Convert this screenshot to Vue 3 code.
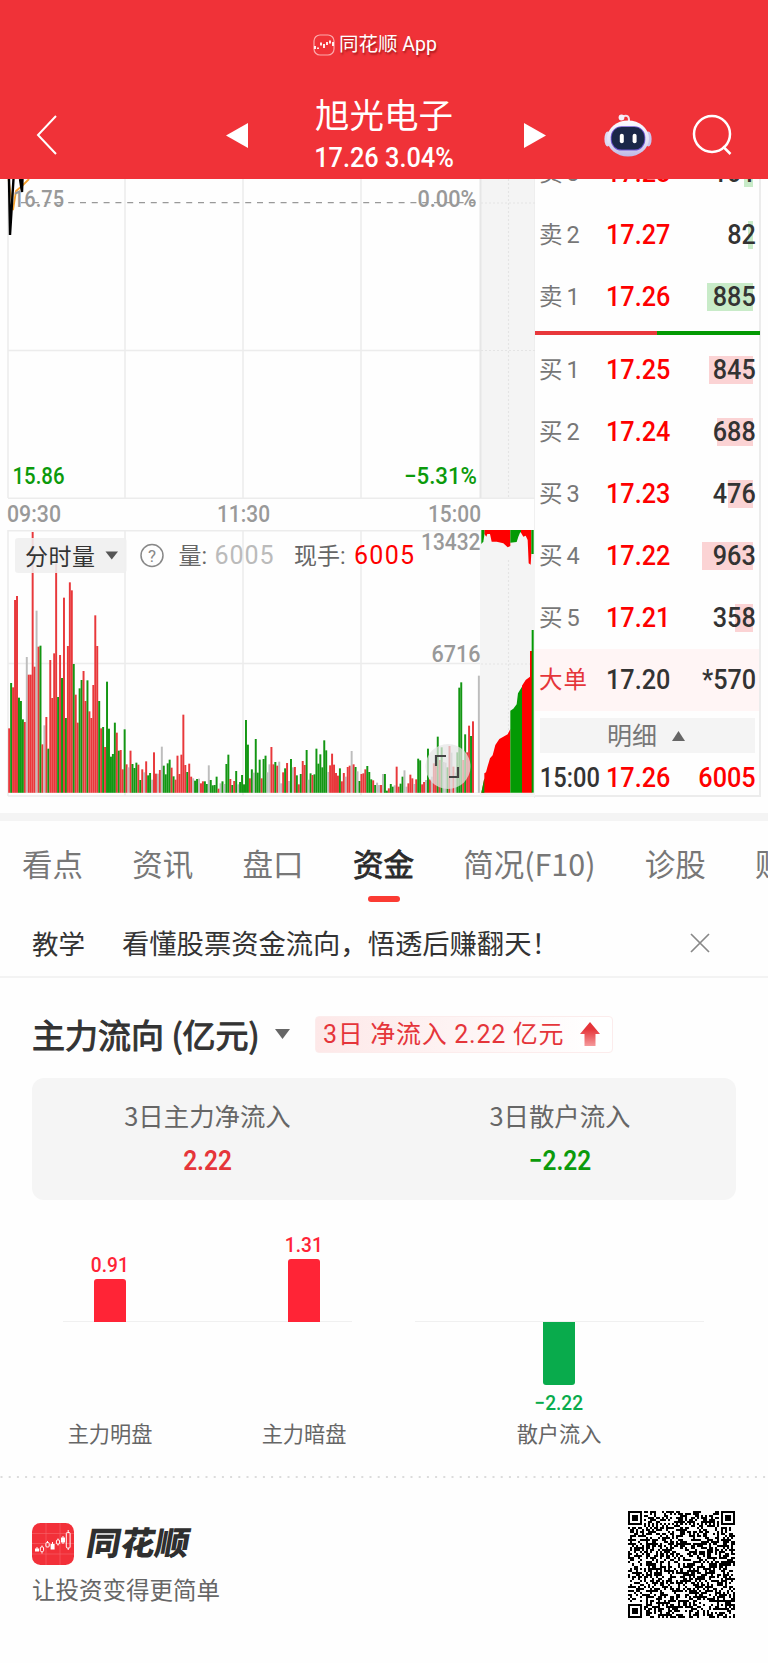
<template>
  <div class="page">
    <header class="header">
      <div class="app-line">
        <svg class="app-icon" viewBox="0 0 22 22">
          <rect x="1" y="1" width="20" height="20" rx="6" class="app-icon-frame" />
          <path d="M2 15v-3M5 15v-1.500M8 11.500v-3M11 14v-4M14 11v-3M17 9.500v-3M20 12v-4" />
        </svg>
        <span>同花顺 App</span>
      </div>
      <div class="nav">
        <svg class="back" viewBox="0 0 22 42">
          <path d="M20 2 2 21 20 40" />
        </svg>
        <svg class="prev" viewBox="0 0 22 25"><path d="M0 12.500 22 0v25z" /></svg>
        <div class="stock">
          <div class="stock-name">旭光电子</div>
          <div class="stock-price">17.26 3.04%</div>
        </div>
        <svg class="next" viewBox="0 0 22 25"><path d="M22 12.500 0 0v25z" /></svg>
        <svg class="robot" viewBox="0 0 48 44">
          <defs>
            <linearGradient id="shell" x1="0" y1="0" x2="0" y2="1">
              <stop offset="0" stop-color="#fbfbff" />
              <stop offset="0.6" stop-color="#e3e1f5" />
              <stop offset="1" stop-color="#bdb8e6" />
            </linearGradient>
          </defs>
          <path d="M18.500 3.500q7-3 6.500 5" fill="none" stroke="#f3dfea" stroke-width="2" />
          <circle cx="17.500" cy="4.500" r="2.900" fill="#f6f0fa" />
          <ellipse cx="3.600" cy="26" rx="3.200" ry="7.500" fill="#dcd9f3" />
          <ellipse cx="44.400" cy="26" rx="3.200" ry="7.500" fill="#cbc5ee" />
          <ellipse cx="24" cy="25.500" rx="21" ry="18" fill="url(#shell)" />
          <rect x="6.700" y="13.200" width="34.600" height="24.400" rx="11" fill="#6d55cf" />
          <rect x="7.600" y="14" width="32.800" height="22.600" rx="10" fill="#1a2748" />
          <rect x="15.800" y="20.800" width="4" height="9.500" rx="2" fill="#fff" />
          <rect x="28.600" y="20.800" width="4" height="9.500" rx="2" fill="#fff" />
        </svg>
        <svg class="search" viewBox="0 0 42 42">
          <circle cx="20" cy="20" r="18" />
          <path d="M31 32.500 38.500 40" />
        </svg>
      </div>
    </header>

    <section class="market">
      <svg class="charts" width="535" height="621" viewBox="0 179 535 621">
        <!-- price chart -->
        <rect x="480" y="179" width="55" height="319" class="shade" />
        <g class="grid">
          <path d="M8 179V498M125 179V498M243 179V498M361 179V498M535 179V798" />
          <path d="M8 350.500H480M8 498.200H535" />
          <path d="M8 530.800H480M8 796H535M8 663.500H480" />
          <path d="M8 530V796M125 530V796M243 530V796M361 530V796" />
        </g>
        <path d="M480.500 179V498" class="session-end" />
        <path d="M21 202.700H480" class="prev-close" />
        <path d="M8.500 179 13 210 16 191 22 186 29 179" class="avg-line" />
        <path d="M9 179 10 235 13.500 179M20 179 22 192 22.500 179" class="price-line" />
        <g class="axis">
          <text x="13" y="207" textLength="51" lengthAdjust="spacingAndGlyphs">16.75</text>
          <text x="417.500" y="207" textLength="59" lengthAdjust="spacingAndGlyphs">0.00%</text>
          <text x="12.500" y="484" textLength="52" lengthAdjust="spacingAndGlyphs" class="down">15.86</text>
          <text x="404" y="484" textLength="73" lengthAdjust="spacingAndGlyphs" class="down">−5.31%</text>
          <text x="7" y="521.500" textLength="54" lengthAdjust="spacingAndGlyphs">09:30</text>
          <text x="217" y="521.500" textLength="53" lengthAdjust="spacingAndGlyphs">11:30</text>
          <text x="428" y="521.500" textLength="53" lengthAdjust="spacingAndGlyphs">15:00</text>
        </g>

        <!-- volume chart -->
        <rect x="480" y="530" width="55" height="266" class="shade" />
        <path d="M508.500 179V498M508.500 560V740M481 350.500H535M481 203H535M481 664H530" class="dots" />
        <rect
          v-for="(bar, i) in volumes"
          :key="i"
          :x="8.2 + i * 1.957"
          :y="bar.y"
          width="1.957"
          :height="792.8 - bar.y"
          :fill="bar.color"
        />
        <g transform="translate(240 520) scale(0.33333)">
          <path class="red" d="M724 818 733 775 733 760 738 757 742 742 750 715 758 706 766 675 778 657 790 650 803 643 811 627V818z" />
          <path class="green" d="M724 818 733 775V818z" />
          <path class="green" d="M811 818V572L820 566 830 553 834 520 846 500V818z" />
          <path class="red" d="M846 818V497L857 480 870 470V393H876V818z" />
          <path class="green" d="M875 330H881V818H875z" />
          <path class="red" d="M733 30V42L739 50 742 42 750 42 755 65 770 65 790 70 803 82 811 78V30z" />
          <path class="green" d="M724 30V72L730 65 733 45V30z" />
          <path class="green" d="M811 30V68L830 66 835 50 840 38 845 35V30z" />
          <path class="red" d="M843 30V38L850 50 857 47 863 60 866 130 872 134 874 100V30z" />
          <path class="green" d="M874 30H881V102H874z" />
        </g>
        <g class="axis">
          <text x="421" y="550" textLength="59.500" lengthAdjust="spacingAndGlyphs">13432</text>
          <text x="431.500" y="661.500" textLength="49" lengthAdjust="spacingAndGlyphs">6716</text>
        </g>
        <circle cx="448" cy="766.500" r="22.500" class="expand" />
        <path d="M436 766V756H446M449 777H458V767" class="expand-icon" />
        <!-- indicator bar -->
        <rect x="15" y="538" width="111.500" height="35" rx="3" class="selector" />
        <text x="25" y="564.500" class="label strong" textLength="70">分时量</text>
        <path d="M105.500 551.500h12.500l-6.250 8z" fill="#555" />
        <circle cx="152" cy="555.500" r="11" class="help" />
        <text x="152" y="561.500" class="help-mark">?</text>
        <text x="178.500" y="564" class="label">量:</text>
        <text x="214.500" y="564" class="value" textLength="59">6005</text>
        <text x="294" y="564" class="label">现手:</text>
        <text x="354" y="564" class="value up" textLength="60">6005</text>
      </svg>

      <div class="book">
        <div class="book-row" v-for="row in asks" :key="row.name">
          <span class="side">{{ row.name }}</span>
          <span class="price">{{ row.price }}</span>
          <span class="qty">
            <i class="depth sell" :style="{ width: row.depth + 'px' }"></i>
            <b>{{ row.qty }}</b>
          </span>
        </div>
        <div class="ratio"><i></i></div>
        <div class="book-row" v-for="row in bids" :key="row.name">
          <span class="side">{{ row.name }}</span>
          <span class="price">{{ row.price }}</span>
          <span class="qty">
            <i class="depth" :style="{ width: row.depth + 'px' }"></i>
            <b>{{ row.qty }}</b>
          </span>
        </div>
        <div class="book-row big-order">
          <span class="side">大单</span>
          <span class="price">17.20</span>
          <span class="qty"><b>*570</b></span>
        </div>
        <div class="detail">
          <span>明细</span>
          <svg viewBox="0 0 13 10"><path d="M0 10 6.500 0 13 10z" /></svg>
        </div>
        <div class="book-row tick">
          <span class="time">15:00</span>
          <span class="price">17.26</span>
          <span class="qty"><b>6005</b></span>
        </div>
      </div>
    </section>

    <div class="band"></div>

    <nav class="tabs">
      <span v-for="tab in tabs" :key="tab" :class="{ active: tab === activeTab }" @click="activeTab = tab">{{ tab }}</span>
    </nav>

    <div class="notice">
      <span class="notice-tag">教学</span>
      <span class="notice-text">看懂股票资金流向，悟透后赚翻天！</span>
      <svg viewBox="0 0 20 20"><path d="M1 1 19 19M19 1 1 19" /></svg>
    </div>

    <section class="flow">
      <div class="flow-head">
        <h2>主力流向 (亿元)</h2>
        <svg class="caret" viewBox="0 0 15 10"><path d="M0 0h15L7.500 10z" /></svg>
        <div class="badge">
          <span>3日 净流入 2.22 亿元</span>
          <svg viewBox="0 0 20 24">
            <defs>
              <linearGradient id="arrow" x1="0" y1="0" x2="0" y2="1">
                <stop offset="0.3" stop-color="#e5353a" />
                <stop offset="1" stop-color="#f59a9c" />
              </linearGradient>
            </defs>
            <path d="M10 0 20 12H15.500V24H4.500V12H0z" fill="url(#arrow)" />
          </svg>
        </div>
      </div>

      <div class="summary">
        <div>
          <p>3日主力净流入</p>
          <strong class="inflow">2.22</strong>
        </div>
        <div>
          <p>3日散户流入</p>
          <strong class="outflow">−2.22</strong>
        </div>
      </div>

      <div class="bars">
        <div class="bar-group">
          <div class="bar-col" v-for="item in mainFlow" :key="item.name">
            <div class="upper">
              <span class="bar-value">{{ item.value }}</span>
              <i :style="{ height: item.size + 'px' }"></i>
            </div>
            <div class="lower"></div>
            <span class="bar-name">{{ item.name }}</span>
          </div>
        </div>
        <div class="bar-group retail">
          <div class="bar-col" v-for="item in retailFlow" :key="item.name">
            <div class="upper"></div>
            <div class="lower">
              <i :style="{ height: item.size + 'px' }"></i>
              <span class="bar-value">{{ item.value }}</span>
            </div>
            <span class="bar-name">{{ item.name }}</span>
          </div>
        </div>
      </div>
    </section>

    <svg class="divider" width="768" height="4" viewBox="0 0 768 4">
      <path d="M0.500 2H768" />
    </svg>

    <footer class="footer">
      <div>
        <div class="brand">
          <svg viewBox="0 0 42 42">
            <rect width="42" height="42" rx="8.500" fill="#f23039" />
            <path d="M0 10.500H42M0 20.500H42M0 31H42M14 0V42M28 0V42" stroke="#f7666c" stroke-width="0.600" />
            <g fill="none" stroke="#fff" stroke-width="1">
              <path d="M5 24v2M10 22.500v1.500M10 29v1.500M15.500 18v1.500M20.500 19v2M26 15.500v1.500M26 21v1.500M31 13v2M31 19v2M36.200 7v2M36.200 25v2" />
              <rect x="8.300" y="24" width="3.300" height="4.500" rx="1" />
              <rect x="13.900" y="19.500" width="3.300" height="4.500" rx="1" />
              <rect x="24.400" y="17" width="3.200" height="4" rx="1" />
              <rect x="34.300" y="9.500" width="3.800" height="15.500" rx="1" />
            </g>
            <path d="M3 25.500h4v3H3zM18.600 21h4v5.500h-4zM29 14.500h4v5h-4z" fill="#fff" />
          </svg>
          <span>同花顺</span>
        </div>
        <p>让投资变得更简单</p>
      </div>
      <svg class="qr" viewBox="0 0 53 53" shape-rendering="crispEdges">
        <path :d="qrPath" />
      </svg>
    </footer>
  </div>
</template>

<script setup>
import { ref } from "vue";

const tabs = ["看点", "资讯", "盘口", "资金", "简况(F10)", "诊股", "财务"];
const activeTab = ref("资金");

const asks = [
  { name: "卖3", price: "17.28", qty: "101", depth: 9 },
  { name: "卖2", price: "17.27", qty: "82", depth: 5 },
  { name: "卖1", price: "17.26", qty: "885", depth: 46 },
];

const bids = [
  { name: "买1", price: "17.25", qty: "845", depth: 44 },
  { name: "买2", price: "17.24", qty: "688", depth: 36 },
  { name: "买3", price: "17.23", qty: "476", depth: 25 },
  { name: "买4", price: "17.22", qty: "963", depth: 51 },
  { name: "买5", price: "17.21", qty: "358", depth: 18 },
];

const mainFlow = [
  { name: "主力明盘", value: "0.91", size: 43 },
  { name: "主力暗盘", value: "1.31", size: 63 },
];

const retailFlow = [{ name: "散户流入", value: "−2.22", size: 63 }];

// one entry per minute: r = up, g = down, w = flat, then the bar top in thirds of a pixel
const minutes = `
r625 g489 r502 r240 r228 g533 g543 g598 r606 w411 r464 r464 r36 r440 w272 r380 g377 r673 w616 r591
g686 r420 r534 r400 r130 g531 r405 g474 r233 g594 r378 r187 r211 g432 r524 r608 g505 g480 r453 r543
g481 r574 r594 r495 r286 r378 g543 r625 g621 r681 g485 g626 g710 g702 g608 r638 g692 r690 r748 g628
r733 w742 r692 g732 g744 g728 r734 g780 r748 w757 r724 g766 g759 w779 r697 r761 w761 r750 w680 g737
g763 g730 g719 r743 g769 r779 r707 r762 r704 r584 r735 g756 r731 r770 w775 g782 g777 w776 r790 r784
g784 g792 w736 g780 g796 g795 g770 r806 w790 g784 w792 g732 g704 r777 g795 r783 g753 w793 g786 g765
g793 g600 g674 r775 g748 w758 g657 g758 g719 r775 g717 g707 w757 w733 r681 r733 g726 r737 w725 w790
r757 g745 r729 w783 g717 w742 r741 g766 r793 g762 r723 r735 g690 w779 g760 r765 g763 g686 g731 g703
g742 g661 g691 w756 r736 r701 r734 r759 r767 g745 r784 r759 w770 r741 r737 w693 r733 g741 w754 g783
r762 r760 r748 g738 g756 g778 r781 g795 w788 w795 r795 w762 g762 g812 r805 g792 g800 w796 r740 r800
g791 g770 w751 w800 r790 r764 r775 w792 r778 g716 g721 r793 r786 w780 g686 r778 w770 r730 r735 g650
r720 g682 w726 w728 g742 r678 w698 r740 w758 g697 g503 g487 r720 g643 r697 r617 g648 r604 w818 w818
w467`;

const barColors = { r: "#e8383b", g: "#139613", w: "#bdbdbd" };

const volumes = minutes
  .trim()
  .split(/\s+/)
  .map((m) => ({ y: 520 + Number(m.slice(1)) / 3, color: barColors[m[0]] }));

const finder = (x, y) => {
  const d = Math.max(Math.abs(x - 3), Math.abs(y - 3));
  return d === 3 || d < 2;
};

const buildQr = () => {
  const size = 53;
  let seed = 20177;
  let path = "";
  for (let y = 0; y < size; y++) {
    for (let x = 0; x < size; x++) {
      seed = (seed * 1103515245 + 12345) % 2147483648;
      let on = seed / 2147483648 < 0.5;
      if (x < 8 && y < 8) on = x < 7 && y < 7 && finder(x, y);
      else if (x > 44 && y < 8) on = x > 45 && y < 7 && finder(x - 46, y);
      else if (x < 8 && y > 44) on = x < 7 && y > 45 && finder(x, y - 46);
      else if (x > 43 && x < 49 && y > 43 && y < 49) {
        on = Math.max(Math.abs(x - 46), Math.abs(y - 46)) !== 1;
      } else if (x === 6 || y === 6) on = (x + y) % 2 === 0;
      if (on) path += `M${x} ${y}h1v1h-1z`;
    }
  }
  return path;
};

const qrPath = buildQr();
</script>

<style>
body {
  background: #fff;
}
</style>

<style scoped>
.page {
  width: 768px;
  height: 1663px;
  overflow: hidden;
  background: #fefefe;
  color: #333;
  font-family: Roboto, "Noto Sans CJK SC", sans-serif;
  line-height: 1;
}

p,
h2 {
  margin: 0;
}

svg {
  display: block;
  flex: none;
}

.header {
  height: 179px;
  background: #f03238;
  color: #fff;
}

.app-line {
  display: flex;
  align-items: center;
  justify-content: center;
  gap: 4px;
  height: 90px;
  padding: 0 18px 1px 0;
  box-sizing: border-box;
  font-size: 19.5px;
  text-shadow: 1px 2px 2px rgba(90, 0, 0, 0.5);
}

.app-icon {
  width: 22px;
  height: 22px;
  fill: none;
  stroke: #fff;
  stroke-width: 1.8;
}

.app-icon-frame {
  stroke: #fba9ab;
  stroke-width: 1.2;
}

.nav {
  display: flex;
  align-items: center;
  height: 89px;
  padding: 1px 34px 0 36px;
  box-sizing: border-box;
}

.back {
  width: 22px;
  height: 42px;
  fill: none;
  stroke: #fff;
  stroke-width: 2;
}

.prev,
.next {
  width: 22px;
  height: 25px;
  fill: #fff;
}

.prev {
  margin-left: 168px;
}

.next {
  margin-right: 58px;
}

.stock {
  width: 276px;
  padding-right: 4px;
  box-sizing: border-box;
  text-align: center;
}

.stock-name {
  margin-bottom: 10px;
  font-size: 34.5px;
}

.stock-price {
  font-size: 27.5px;
  font-weight: 500;
  transform: scaleX(0.92);
}

.robot {
  width: 48px;
  height: 44px;
}

.search {
  width: 42px;
  height: 42px;
  margin-left: 40px;
  fill: none;
  stroke: #fff;
  stroke-width: 2.5;
}

.market {
  display: flex;
  height: 634px;
  overflow: hidden;
}

.shade {
  fill: #f4f4f4;
}

.grid {
  fill: none;
  stroke: #ececec;
  stroke-width: 1.5;
}

.session-end {
  stroke: #e6e6e6;
  stroke-width: 2;
}

.prev-close {
  stroke: #999;
  stroke-width: 1.3;
  stroke-dasharray: 6 5.8;
}

.dots {
  stroke: #e4e4e4;
  stroke-width: 1.2;
  stroke-dasharray: 2 2;
}

.avg-line {
  fill: none;
  stroke: #f5a02c;
  stroke-width: 1.8;
}

.price-line {
  fill: none;
  stroke: #000;
  stroke-width: 2.4;
}

.axis {
  fill: #999;
  font-size: 23.5px;
  font-weight: 500;
}

.axis .down {
  fill: #0b9a0b;
}

.red {
  fill: #fe0000;
}

.green {
  fill: #049a04;
}

.selector {
  fill: #efefef;
  fill-opacity: 0.88;
}

.label {
  fill: #666;
  font-size: 23px;
}

.label.strong {
  fill: #333;
}

.value {
  fill: #bbb;
  font-size: 25px;
}

.value.up {
  fill: #fe0000;
}

.help {
  fill: none;
  stroke: #888;
  stroke-width: 1.5;
}

.help-mark {
  fill: #888;
  font-size: 17px;
  text-anchor: middle;
}

.expand {
  fill: #e4e4e4;
  fill-opacity: 0.72;
}

.expand-icon {
  fill: none;
  stroke: #444;
  stroke-width: 2.2;
}

.book {
  width: 226px;
  height: 655px;
  margin-top: -37px;
  box-sizing: border-box;
  border-right: 2px solid #ececec;
  border-bottom: 2px solid #ececec;
}

.book-row {
  display: flex;
  align-items: center;
  height: 62px;
  padding-left: 4px;
  box-sizing: border-box;
}

.side {
  width: 67px;
  padding-top: 1px;
  color: #777;
  font-size: 23.5px;
  letter-spacing: 4px;
}

.price {
  width: 70px;
  color: #fe0000;
  font-size: 28px;
  font-weight: 500;
  transform: scaleX(0.9);
  transform-origin: left;
}

.qty {
  position: relative;
  display: flex;
  align-items: center;
  justify-content: flex-end;
  width: 80px;
  height: 28px;
}

.qty b {
  position: relative;
  font-size: 28px;
  font-weight: 500;
  transform: scaleX(0.9);
  transform-origin: right;
}

.depth {
  position: absolute;
  top: 0;
  right: 3px;
  height: 28px;
  background: #fbd3d4;
}

.depth.sell {
  background: #c8ebc8;
}

.ratio {
  height: 4px;
  margin: 3px -1px 4px 0;
  background: #049a04;
}

.ratio i {
  display: block;
  width: 122px;
  height: 4px;
  background: #e8383b;
}

.big-order {
  background: #fff5f5;
}

.big-order .side {
  color: #e5353a;
  letter-spacing: 1px;
}

.big-order .price {
  color: #333;
}

.detail {
  display: flex;
  align-items: center;
  gap: 15px;
  height: 35px;
  margin: 7px 4px 7px 5px;
  padding: 1px 0 0 67px;
  box-sizing: border-box;
  background: #f4f4f4;
  color: #777;
  font-size: 25px;
}

.detail svg {
  width: 13px;
  height: 10px;
  fill: #666;
}

.tick {
  height: 36px;
}

.tick b {
  color: #fe0000;
}

.time {
  width: 67px;
  padding-left: 1px;
  box-sizing: border-box;
  font-size: 27.5px;
  font-weight: 500;
  white-space: nowrap;
  transform: scaleX(0.86);
  transform-origin: left;
}

.band {
  height: 8px;
  background: #f4f4f4;
}

.tabs {
  display: flex;
  gap: 49.3px;
  height: 86px;
  padding-left: 22px;
  overflow: hidden;
  color: #777;
  font-family: "Noto Sans CJK SC", sans-serif;
  font-size: 30.5px;
  line-height: 84px;
  white-space: nowrap;
}

.tabs .active {
  position: relative;
  color: #2b2b2b;
  -webkit-text-stroke: 0.8px #2b2b2b;
}

.tabs .active::after {
  content: "";
  position: absolute;
  bottom: 5px;
  left: 15px;
  width: 32px;
  height: 6px;
  border-radius: 3px;
  background: #fb3b33;
}

.notice {
  display: flex;
  align-items: center;
  height: 71px;
  padding: 3px 58px 0 32px;
  box-sizing: border-box;
  border-bottom: 2px solid #f3f3f3;
  font-family: "Noto Sans CJK SC", sans-serif;
  font-size: 27.3px;
}

.notice-tag {
  width: 90px;
  font-size: 26.5px;
}

.notice-text {
  flex: 1;
  white-space: nowrap;
}

.notice svg {
  width: 20px;
  height: 20px;
  stroke: #888;
  stroke-width: 1.7;
}

.flow-head {
  display: flex;
  align-items: center;
  height: 97px;
  padding: 15px 32px 0;
  box-sizing: border-box;
}

.flow-head h2 {
  width: 243px;
  font-family: "Noto Sans CJK SC", sans-serif;
  font-size: 33px;
  font-weight: 400;
  white-space: nowrap;
  -webkit-text-stroke: 1px #333;
}

.caret {
  width: 15px;
  height: 10px;
  fill: #666;
}

.badge {
  display: flex;
  align-items: center;
  justify-content: space-between;
  width: 298px;
  height: 37px;
  margin-left: 25px;
  padding: 0 12px 0 7px;
  box-sizing: border-box;
  border: 1px solid #fcecec;
  border-radius: 4px;
  background: linear-gradient(90deg, #fde8e8, #fff 95%);
  color: #e5353a;
  font-size: 25px;
  letter-spacing: 0.7px;
  white-space: nowrap;
}

.badge svg {
  width: 20px;
  height: 24px;
}

.summary {
  display: grid;
  grid-template-columns: 1fr 1fr;
  height: 122px;
  margin: 3px 32px 0;
  padding-top: 25px;
  box-sizing: border-box;
  border-radius: 12px;
  background: #f5f5f5;
  text-align: center;
}

.summary p {
  margin-bottom: 19px;
  color: #666;
  font-family: "Noto Sans CJK SC", sans-serif;
  font-size: 25.4px;
}

.summary div:first-child {
  padding-right: 1px;
}

.summary strong {
  display: block;
  font-size: 28px;
  font-weight: 600;
  transform: scaleX(0.87);
}

.inflow {
  color: #e5353a;
}

.outflow {
  color: #0b9a0b;
}

.bars {
  display: flex;
  gap: 63px;
  height: 275px;
  padding: 0 64px 0 63px;
}

.bar-group {
  display: flex;
  justify-content: space-between;
  width: 290px;
  box-sizing: border-box;
  background: linear-gradient(#f0f0f0, #f0f0f0) 0 121px / 100% 1px no-repeat;
}

.bar-group:first-child {
  padding: 0 6px 0 5px;
}

.bar-group.retail {
  justify-content: center;
  padding-right: 1px;
}

.bar-col {
  display: flex;
  flex-direction: column;
  align-items: center;
  width: 84px;
}

.bar-col i {
  width: 32px;
  background: #ff2436;
}

.upper {
  display: flex;
  flex-direction: column;
  align-items: center;
  justify-content: flex-end;
  gap: 3px;
  height: 122px;
}

.upper i {
  border-radius: 3px 3px 0 0;
}

.lower {
  display: flex;
  flex-direction: column;
  align-items: center;
  gap: 8px;
  height: 102px;
}

.lower i {
  border-radius: 0 0 3px 3px;
  background: #09ab4c;
}

.bar-value {
  color: #ff2436;
  font-size: 21px;
  font-weight: 500;
  transform: scaleX(0.91);
}

.lower .bar-value {
  color: #09ab4c;
}

.bar-name {
  color: #666;
  font-size: 21.2px;
  white-space: nowrap;
}

.divider path {
  stroke: #dcdcdc;
  stroke-width: 2;
  stroke-dasharray: 2 6.2;
}

.footer {
  display: flex;
  justify-content: space-between;
  padding: 32px 33px 0 32px;
}

.brand {
  display: flex;
  align-items: center;
  gap: 13px;
  margin-top: 12px;
}

.brand svg {
  width: 42px;
  height: 42px;
}

.brand span {
  color: #2f2f2f;
  font-size: 34.2px;
  font-weight: 900;
  transform: skewX(-10deg) scaleY(0.95);
}

.footer p {
  margin-top: 15px;
  color: #666;
  font-size: 23.5px;
}

.qr {
  width: 107px;
  height: 107px;
  fill: #000;
}
</style>
